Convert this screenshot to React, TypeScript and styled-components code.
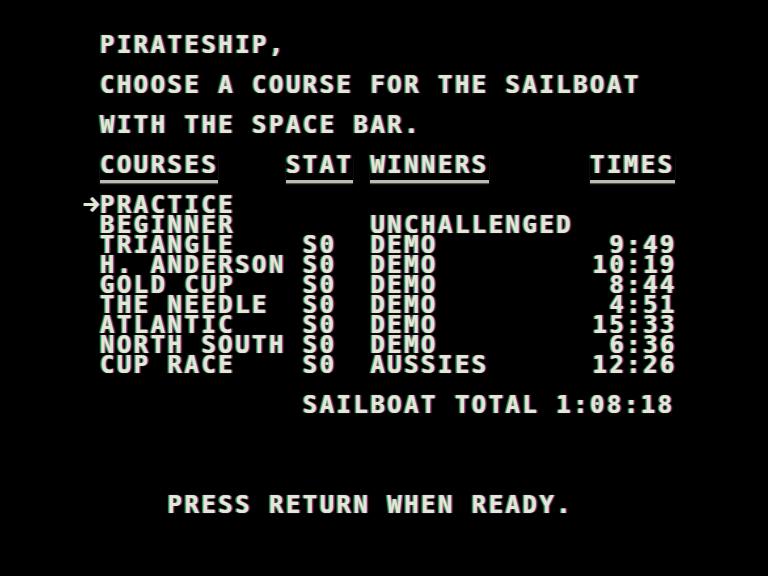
import styled, { createGlobalStyle } from "styled-components";

const CELL = 16.9;
const ROW = 20;
const FONT = 24;
const SPACING = CELL - FONT * 0.602;

const courses = [
	{ name: "PRACTICE", stat: "", winner: "", time: "", selected: true },
	{ name: "BEGINNER", stat: "", winner: "UNCHALLENGED", time: "" },
	{ name: "TRIANGLE", stat: "S0", winner: "DEMO", time: "9:49" },
	{ name: "H. ANDERSON", stat: "S0", winner: "DEMO", time: "10:19" },
	{ name: "GOLD CUP", stat: "S0", winner: "DEMO", time: "8:44" },
	{ name: "THE NEEDLE", stat: "S0", winner: "DEMO", time: "4:51" },
	{ name: "ATLANTIC", stat: "S0", winner: "DEMO", time: "15:33" },
	{ name: "NORTH SOUTH", stat: "S0", winner: "DEMO", time: "6:36" },
	{ name: "CUP RACE", stat: "S0", winner: "AUSSIES", time: "12:26" },
];

function Arrow() {
	return (
		<ArrowIcon viewBox="0 0 17 20" width={CELL} height={ROW}>
			<path d="M1 9.5 H14.5" />
			<path d="M8.5 3 L14.5 9.5 L8.5 16" />
		</ArrowIcon>
	);
}

export default function App() {
	return (
		<>
			<GlobalStyle />
			<Screen>
				<Prompt>
					<Line>PIRATESHIP,</Line>
					<Line>CHOOSE A COURSE FOR THE SAILBOAT</Line>
					<Line>WITH THE SPACE BAR.</Line>
				</Prompt>
				<Table>
					<Cell />
					<Heading>COURSES</Heading>
					<Heading>STAT</Heading>
					<Heading>WINNERS</Heading>
					<Heading>TIMES</Heading>
					{courses.map((c) => (
						<Row key={c.name}>
							<Cell>{c.selected ? <Arrow /> : ""}</Cell>
							<Cell>{c.name}</Cell>
							<Cell $indent={1}>{c.stat}</Cell>
							<Cell>{c.winner}</Cell>
							<Cell $right>{c.time}</Cell>
						</Row>
					))}
				</Table>
				<Total>SAILBOAT TOTAL 1:08:18</Total>
				<Footer>PRESS RETURN WHEN READY.</Footer>
			</Screen>
		</>
	);
}

const GlobalStyle = createGlobalStyle`
	html, body {
		margin: 0;
		padding: 0;
		background: #000;
	}
`;

const Screen = styled.div`
	width: 768px;
	height: 576px;
	box-sizing: border-box;
	padding: 35px 0 0 ${100 - CELL}px;
	background: #000;
	color: #e4e6d6;
	font-family: "DejaVu Sans Mono", "Liberation Mono", monospace;
	font-weight: bold;
	font-size: ${FONT}px;
	line-height: ${ROW}px;
	letter-spacing: ${SPACING}px;
	white-space: pre;
	text-shadow: -1.5px 0 rgba(110, 230, 90, 0.55), 1.5px 0 rgba(160, 80, 230, 0.6), 0 0 1px rgba(230, 230, 220, 0.6);
	overflow: hidden;
`;

const Prompt = styled.div`
	padding-left: ${CELL}px;
	display: flex;
	flex-direction: column;
	gap: ${ROW}px;
	margin-bottom: ${ROW}px;
`;

const Line = styled.div`
	height: ${ROW}px;
`;

const Table = styled.div`
	display: grid;
	grid-template-columns: ${CELL}px ${11 * CELL}px ${5 * CELL}px ${13 * CELL}px ${5 * CELL}px;
	grid-template-rows: ${2 * ROW}px;
	grid-auto-rows: ${ROW}px;
`;

const Heading = styled.div`
	justify-self: start;
	align-self: start;
	height: ${ROW + 8}px;
	box-sizing: border-box;
	border-bottom: 3px solid #bcbcb2;
	box-shadow: 0 1px 1px rgba(200, 200, 190, 0.4);
`;

const Row = styled.div`
	display: contents;
`;

const Cell = styled.div<{ $indent?: number; $right?: boolean }>`
	height: ${ROW}px;
	padding-left: ${({ $indent }) => ($indent ?? 0) * CELL}px;
	text-align: ${({ $right }) => ($right ? "right" : "left")};
	margin-right: ${({ $right }) => ($right ? `${-SPACING}px` : "0")};
`;

const ArrowIcon = styled.svg`
	display: block;
	fill: none;
	stroke: #e4e6d6;
	stroke-width: 3;
	filter: drop-shadow(-1px 0 0 rgba(110, 230, 90, 0.55)) drop-shadow(1px 0 0 rgba(160, 80, 230, 0.6));
`;

const Total = styled.div`
	width: ${35 * CELL}px;
	margin-top: ${ROW}px;
	height: ${ROW}px;
	padding-left: ${13 * CELL}px;
	box-sizing: border-box;
`;

const Footer = styled.div`
	margin-top: ${4 * ROW}px;
	padding-left: ${5 * CELL}px;
	height: ${ROW}px;
`;
